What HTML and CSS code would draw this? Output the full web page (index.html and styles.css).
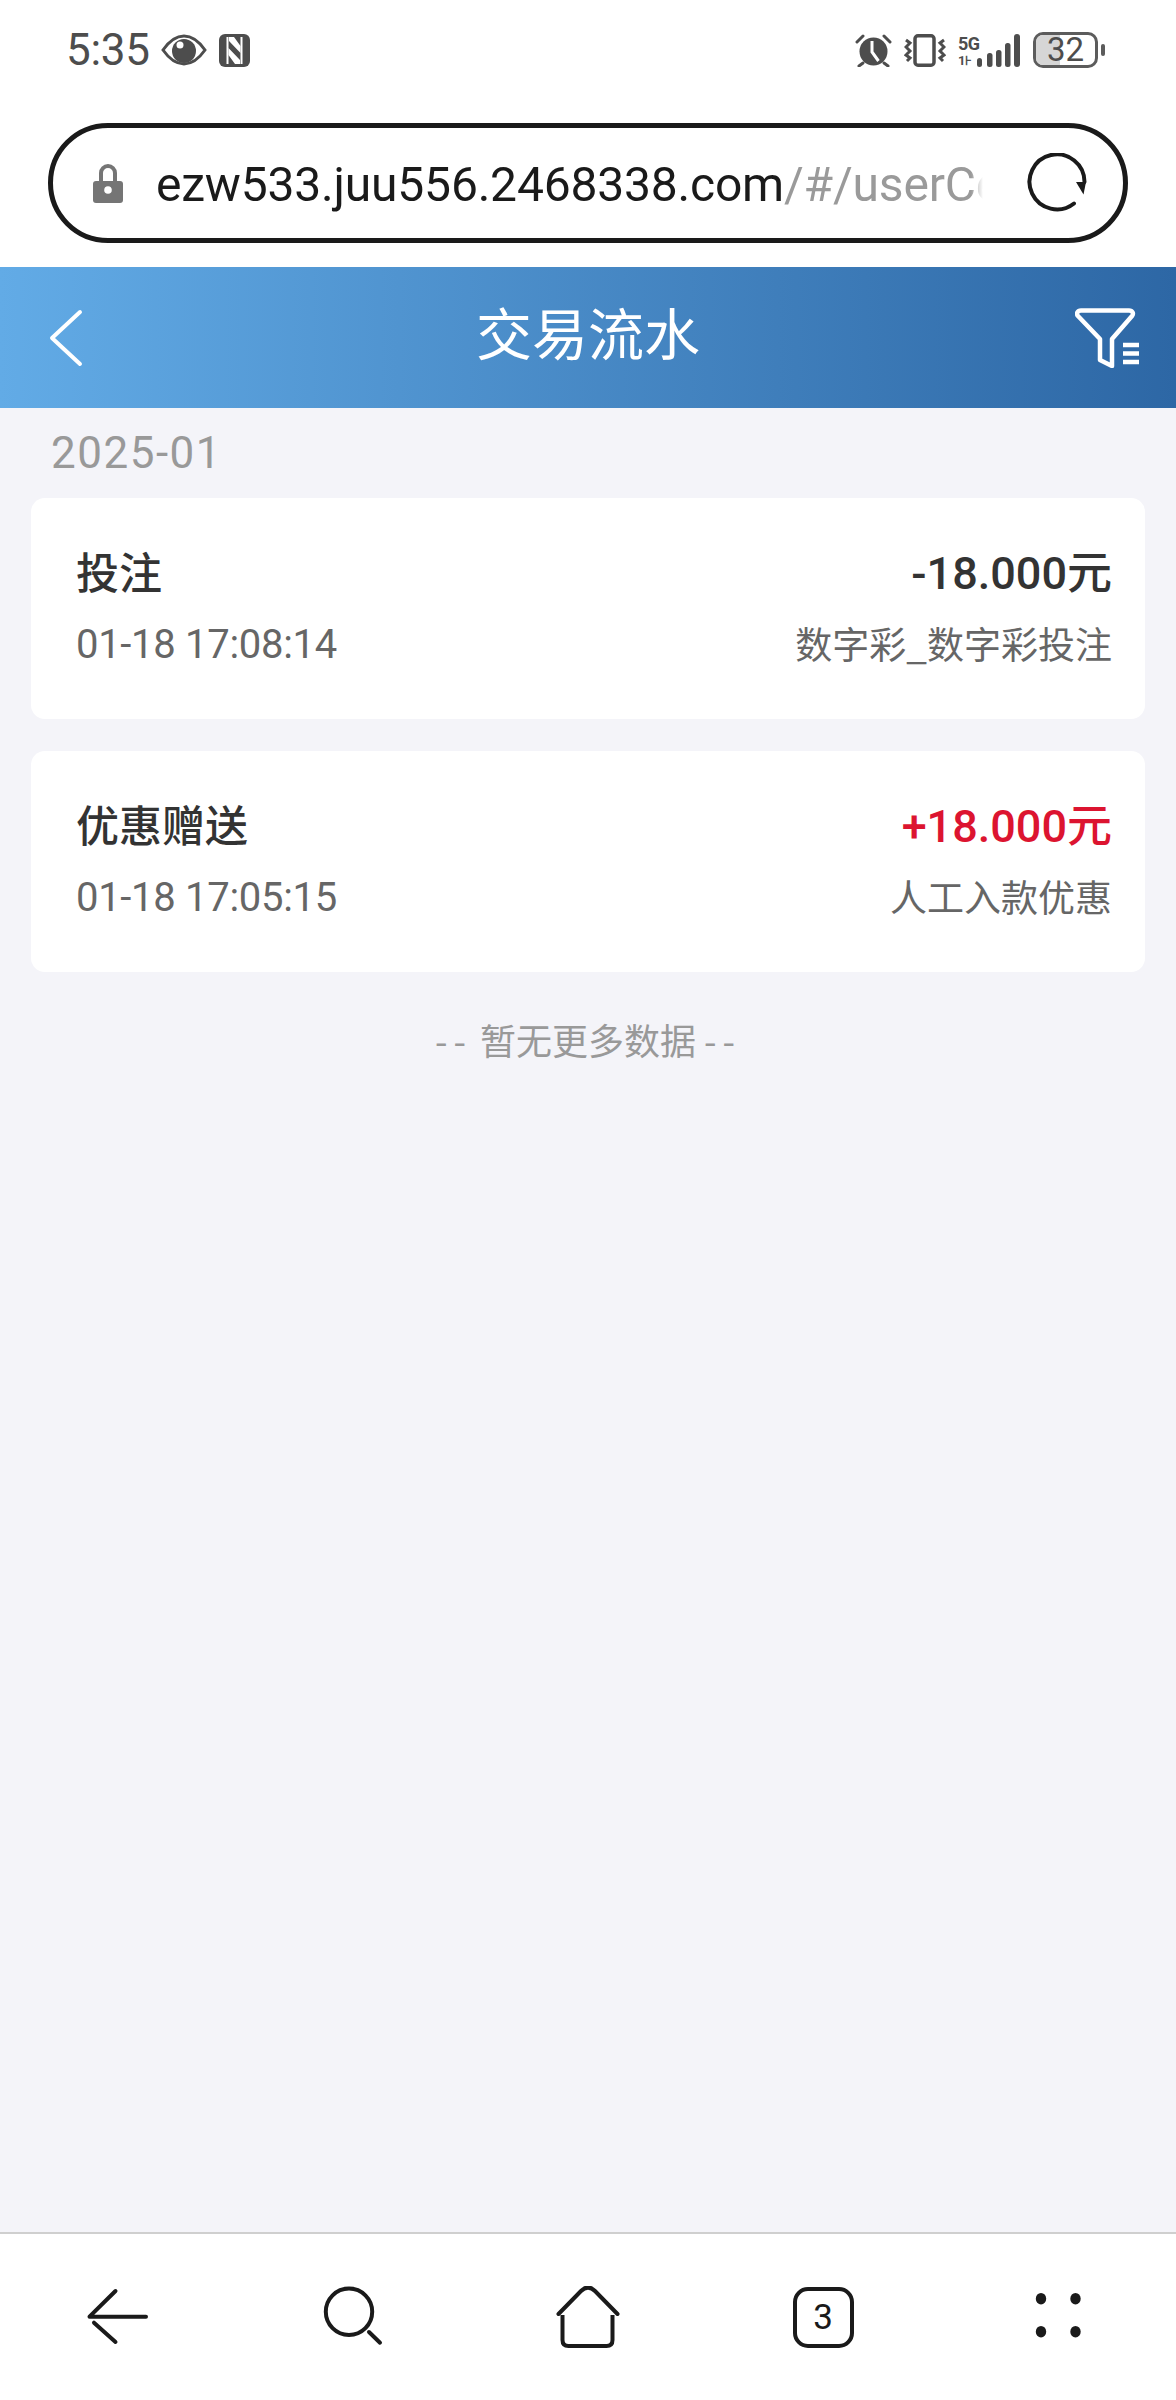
FILE: index.html
```html
<!DOCTYPE html>
<html lang="zh-CN">
<head>
<meta charset="utf-8">
<title>交易流水</title>
<link rel="stylesheet" href="styles.css">
</head>
<body>
<div class="screen">
  <div class="status">
    <div class="status-group">
      <span class="clock">5:35</span>
      <svg class="ic-eye" viewBox="0 0 46 32"><path d="M2 16C9 6 15 2 23 2s14 4 21 14c-7 10-13 14-21 14S9 26 2 16z" fill="none" stroke="#4d4d4d" stroke-width="3"/><circle cx="23" cy="17" r="12" fill="#4d4d4d"/><circle cx="19" cy="11" r="3.500" fill="#fff"/></svg>
      <svg class="ic-nfc" viewBox="0 0 31 33"><rect width="31" height="33" rx="6" fill="#4d4d4d"/><path d="M8.500 3v27M22.500 3v27" stroke="#fff" stroke-width="2" fill="none"/><path d="M10 3h5l6.500 9v7L10 7zM21 30h-5l-6.500-9v-7L21 26z" fill="#fff"/></svg>
    </div>
    <div class="status-group status-right">
      <svg class="ic-alarm" viewBox="0 0 37 33"><circle cx="18.500" cy="17.500" r="14" fill="#4d4d4d"/><path d="M17 7v11l6.500 9" stroke="#fff" stroke-width="3" fill="none"/><path d="M2 8l6-6M35 8l-6-6M8 29l-4 3M29 29l4 3" stroke="#4d4d4d" stroke-width="3" stroke-linecap="round"/></svg>
      <svg class="ic-vib" viewBox="0 0 42 33"><rect x="11" y="1.750" width="19" height="29.500" rx="3" fill="none" stroke="#4d4d4d" stroke-width="3.500"/><path d="M2 6l4 3-4 4 4 4-4 4 4 3-3 3M40 6l-4 3 4 4-4 4 4 4-4 3 3 3" fill="none" stroke="#4d4d4d" stroke-width="3"/></svg>
      <span class="signal">
        <span class="net"><span class="net-5g">5G</span><span class="net-1">1⊦</span></span>
        <svg class="ic-bars" viewBox="0 0 43 33"><rect x="0" y="24" width="5" height="9" rx="2.500" fill="#4d4d4d"/><rect x="10" y="19" width="5.500" height="14" rx="2.500" fill="#4d4d4d"/><rect x="19" y="16" width="5.500" height="17" rx="2.500" fill="#4d4d4d"/><rect x="28" y="9" width="5.500" height="24" rx="2.500" fill="#4d4d4d"/><rect x="37" y="0" width="6" height="33" rx="3" fill="#4d4d4d"/></svg>
      </span>
      <span class="battery"><span class="battery-fill"></span><span class="battery-num">32</span></span>
      <span class="battery-tip"></span>
    </div>
  </div>

  <div class="address-wrap">
    <div class="address">
      <svg class="ic-lock" viewBox="0 0 30 40"><path d="M8 20V10a7 7 0 0 1 14 0v10" fill="none" stroke="#757575" stroke-width="4"/><rect y="18" width="30" height="22" rx="3" fill="#757575"/><circle cx="15" cy="27" r="3.800" fill="#fff"/></svg>
      <div class="url"><span class="url-host">ezw533.juu556.2468338.com</span><span class="url-path">/#/userCenter</span></div>
      <svg class="ic-reload" viewBox="0 0 60 60"><path d="M47 50.500A27.500 27.500 0 1 1 57.500 29" fill="none" stroke="#1a1a1a" stroke-width="4" stroke-linecap="round"/><path d="M49 29h10l-2.500 12.500z" fill="#1a1a1a"/></svg>
    </div>
  </div>

  <header class="nav">
    <svg class="ic-back" viewBox="0 0 36 60"><path d="M32 4L4 30l28 26" fill="none" stroke="#fff" stroke-width="4" stroke-linecap="round" stroke-linejoin="round"/></svg>
    <h1 class="nav-title">交易流水</h1>
    <svg class="ic-filter" viewBox="0 0 64 60"><path d="M6 2.500h48c3.500 0 5 3 3 5.500L37 31v27l-12-6V31L3 8C1 5.500 2.500 2.500 6 2.500z" fill="none" stroke="#fff" stroke-width="4.500" stroke-linejoin="round"/><path d="M48 37h16M48 45.500h16M48 54h16" stroke="#fff" stroke-width="4.500"/></svg>
  </header>

  <main class="content">
    <div class="month">2025-01</div>
    <article class="card">
      <div class="row row-top"><span class="type">投注</span><span class="amount">-18.000元</span></div>
      <div class="row row-bottom"><span class="time">01-18 17:08:14</span><span class="note">数字彩_数字彩投注</span></div>
    </article>
    <article class="card">
      <div class="row row-top"><span class="type">优惠赠送</span><span class="amount amount-plus">+18.000元</span></div>
      <div class="row row-bottom"><span class="time">01-18 17:05:15</span><span class="note">人工入款优惠</span></div>
    </article>
    <div class="nomore"><span class="dash">--</span> 暂无更多数据 <span class="dash">--</span></div>
  </main>

  <nav class="toolbar">
    <svg class="tool" viewBox="0 0 64 62"><path d="M60 30.700H3.500L29.500 5M8 36.700L29.500 56" fill="none" stroke="#1a1a1a" stroke-width="4" stroke-linecap="round" stroke-linejoin="round"/></svg>
    <svg class="tool" viewBox="0 0 64 62"><circle cx="28" cy="25.800" r="23.200" fill="none" stroke="#1a1a1a" stroke-width="4"/><path d="M48 46l11 10.700" stroke="#1a1a1a" stroke-width="4" stroke-linecap="round"/></svg>
    <svg class="tool" viewBox="0 0 64 62"><path d="M2.500 28L25 5c4.500-4.500 9.500-4.500 14 0l22.500 23" fill="none" stroke="#1a1a1a" stroke-width="4" stroke-linecap="round"/><path d="M6.500 29v25c0 4 2 6 6 6h38c4 0 6-2 6-6V29" fill="none" stroke="#1a1a1a" stroke-width="4"/></svg>
    <span class="tabs">3</span>
    <svg class="tool" viewBox="0 0 64 62"><ellipse cx="15" cy="12.700" rx="5.200" ry="5.800" fill="#1a1a1a"/><ellipse cx="49.500" cy="12.700" rx="5.200" ry="5.800" fill="#1a1a1a"/><ellipse cx="15" cy="45.700" rx="5.200" ry="5.800" fill="#1a1a1a"/><ellipse cx="49.500" cy="45.700" rx="5.200" ry="5.800" fill="#1a1a1a"/></svg>
  </nav>
</div>
</body>
</html>
```
FILE: styles.css
```css
* { box-sizing: border-box; margin: 0; padding: 0; }
html, body { width: 1176px; height: 2400px; overflow: hidden; }
body { font-family: "Noto Sans CJK SC", "Noto Sans", sans-serif; background: #fff; }
.screen { width: 1176px; height: 2400px; display: flex; flex-direction: column; background: #f4f4f9; }

.status { height: 100px; padding: 31px 71px 0 66px; background: #fff; display: flex; justify-content: space-between; align-items: flex-start; color: #4d4d4d; flex: none; }
.status-group { display: flex; align-items: center; height: 38px; }
.clock { font: 44px/38px "Roboto", sans-serif; width: 82px; white-space: nowrap; letter-spacing: -0.3px; }
.ic-eye { width: 46px; height: 32px; margin-left: 13px; }
.ic-nfc { width: 31px; height: 33px; margin-left: 12px; }
.ic-alarm { width: 37px; height: 33px; }
.ic-vib { width: 42px; height: 33px; margin-left: 12px; }
.signal { display: flex; align-items: flex-end; height: 33px; margin-left: 12px; }
.net { display: flex; flex-direction: column; width: 19px; font-family: "Roboto", sans-serif; font-weight: 700; color: #4d4d4d; white-space: nowrap; }
.net-5g { font-size: 18px; line-height: 20px; letter-spacing: -0.5px; }
.net-1 { font-size: 13px; line-height: 13px; }
.ic-bars { width: 43px; height: 33px; }
.battery { position: relative; width: 65px; height: 36px; margin-left: 13px; border: 3px solid #5c5c5c; border-radius: 10px; display: flex; align-items: center; justify-content: center; }
.battery-fill { position: absolute; left: 0; top: 0; bottom: 0; width: 24px; background: #d6d6d6; border-radius: 7px 0 0 7px; }
.battery-num { position: relative; font: 33px/30px "Roboto", sans-serif; color: #4d4d4d; }
.battery-tip { width: 4px; height: 12px; margin-left: 3px; background: #5c5c5c; border-radius: 2px; }

.address-wrap { height: 167px; padding: 23px 48px 0; background: #fff; flex: none; }
.address { width: 1080px; height: 120px; border: 5px solid #1a1a1a; border-radius: 60px; display: flex; align-items: center; padding: 0 36px 0 40px; }
.ic-lock { width: 30px; height: 40px; flex: none; }
.url { width: 827px; margin-left: 33px; padding-top: 3px; overflow: hidden; white-space: nowrap; font: 48px/60px "Roboto", sans-serif; letter-spacing: -0.2px; -webkit-mask-image: linear-gradient(to left, transparent 0, #000 12px); mask-image: linear-gradient(to left, transparent 0, #000 12px); }
.url-host { color: #1a1a1a; }
.url-path { color: #9a9a9a; }
.ic-reload { width: 60px; height: 60px; margin-left: auto; flex: none; }

.nav { height: 141px; flex: none; background: linear-gradient(90deg, #62abe6 0%, #2d67a5 100%); display: grid; grid-template-columns: 1fr auto 1fr; align-items: center; padding: 0 37px; }
.ic-back { width: 36px; height: 60px; margin-left: 11px; }
.nav-title { font-size: 56px; line-height: 70px; font-weight: 400; color: #fff; padding-bottom: 14px; }
.ic-filter { width: 64px; height: 60px; justify-self: end; }

.content { flex: 1; padding: 0 31px; display: flex; flex-direction: column; }
.month { height: 90px; padding: 19px 20px 0; font: 44px/52px "Roboto", sans-serif; letter-spacing: 1.500px; color: #999; flex: none; }
.card { height: 221px; flex: none; background: #fff; border-radius: 14px; padding: 46px 33px 0 45px; margin-bottom: 32px; }
.row { display: flex; justify-content: space-between; align-items: center; }
.row-top { height: 56px; }
.row-bottom { height: 56px; margin-top: 16px; }
.type { font-size: 43px; line-height: 56px; font-weight: 500; color: #333; padding-bottom: 5px; }
.amount { font: 500 45px/56px "Roboto", "Noto Sans CJK SC", sans-serif; color: #333; padding-top: 4px; }
.amount-plus { color: #dc1430; }
.time { font: 40px/56px "Roboto", sans-serif; letter-spacing: -0.3px; color: #666; padding-top: 2px; }
.note { font-size: 37px; line-height: 56px; color: #666; padding-bottom: 2px; }
.nomore { font-size: 36px; line-height: 50px; color: #999; text-align: center; margin-top: 10px; }
.dash { letter-spacing: 6px; }

.toolbar { height: 168px; flex: none; background: #fff; border-top: 2px solid #cfcfcf; display: flex; align-items: center; justify-content: space-between; padding: 0 86px; }
.tool { width: 64px; height: 62px; }
.tabs { width: 61px; height: 61px; margin: 0 1.5px; border: 4px solid #1a1a1a; border-radius: 15px; display: flex; align-items: center; justify-content: center; font: 35px/1 "Roboto", sans-serif; color: #1a1a1a; }
```
